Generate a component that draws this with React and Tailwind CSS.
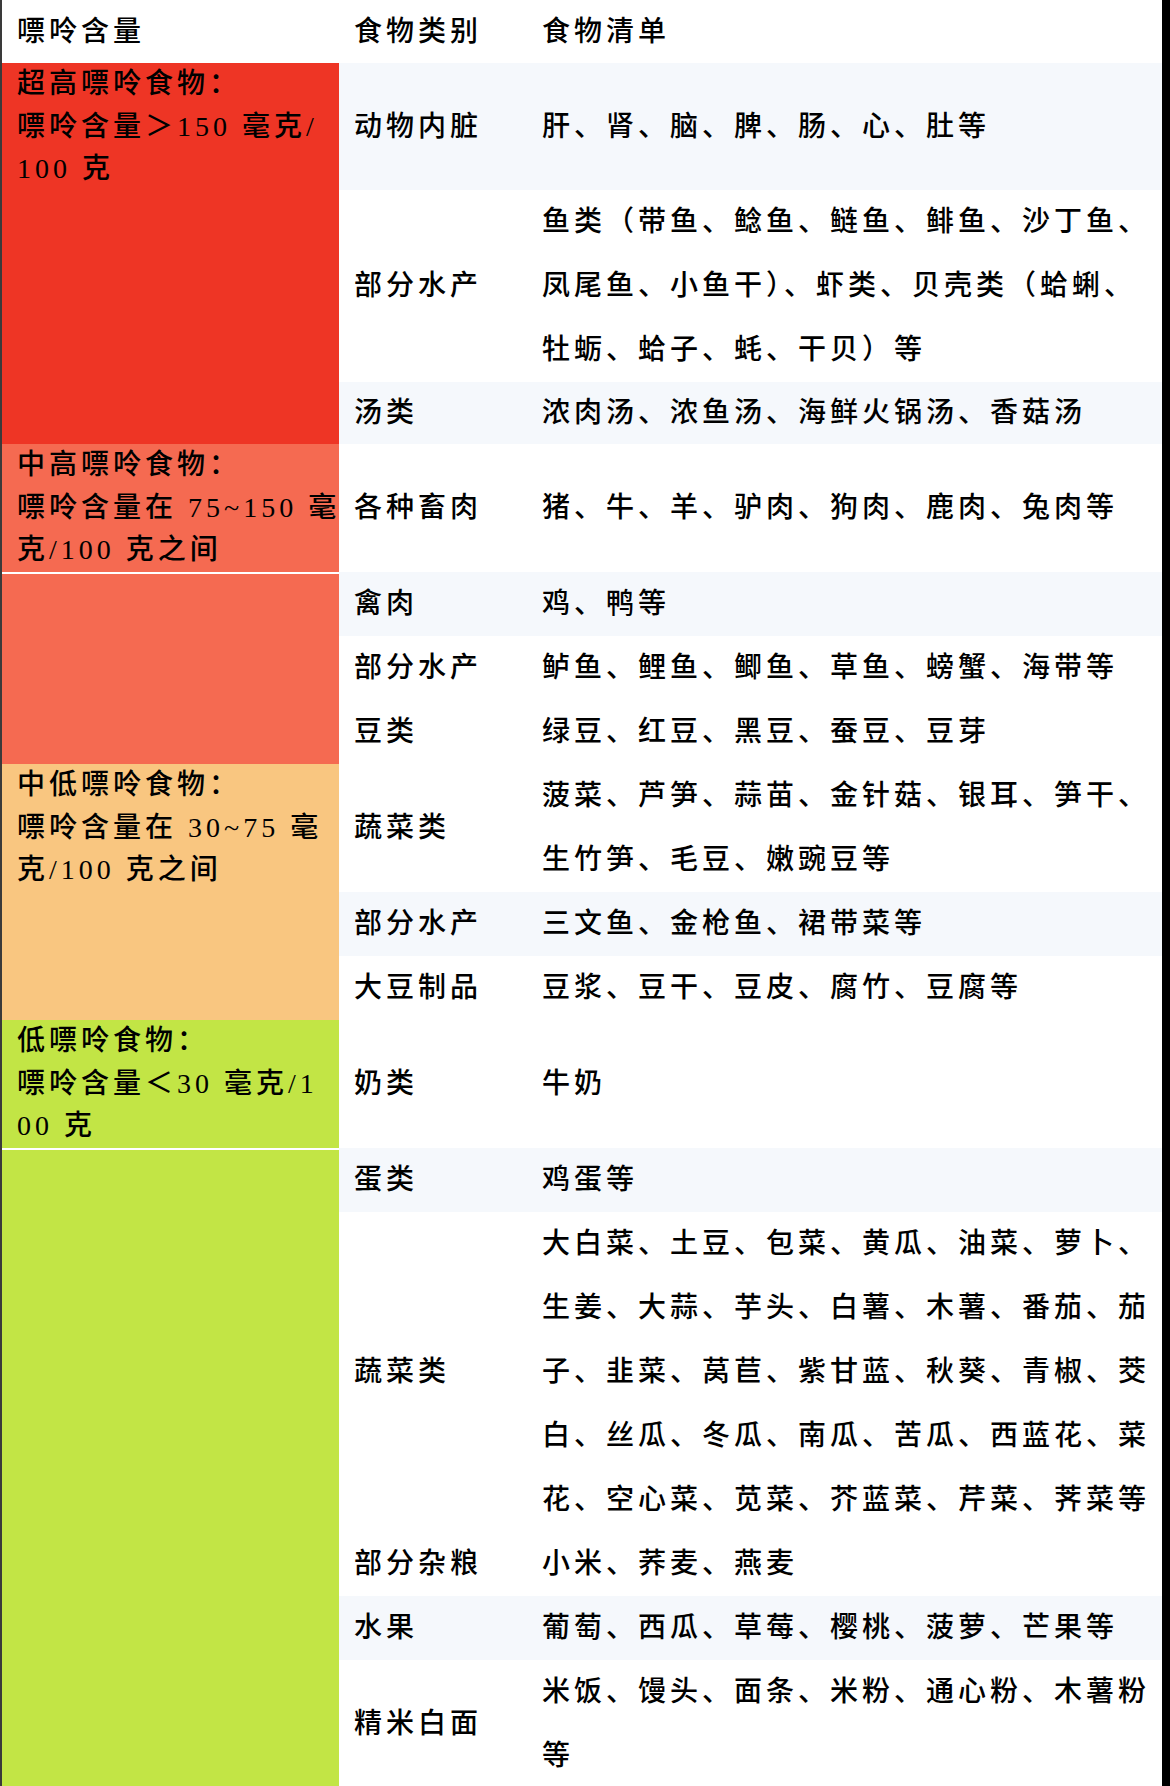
import React from 'react';

const L = 'bg-[#f5f8fc]';
const W = 'bg-white';

const groups = [
  {
    color: 'bg-[#ee3525]',
    label: ['超高嘌呤食物：', '嘌呤含量＞150 毫克/', '100 克'],
    rows: [
      { cat: '动物内脏', items: '肝、肾、脑、脾、肠、心、肚等', h: 'h-[127px]', bg: L },
      { cat: '部分水产', items: '鱼类（带鱼、鲶鱼、鲢鱼、鲱鱼、沙丁鱼、凤尾鱼、小鱼干）、虾类、贝壳类（蛤蜊、牡蛎、蛤子、蚝、干贝）等', bg: W },
      { cat: '汤类', items: '浓肉汤、浓鱼汤、海鲜火锅汤、香菇汤', h: 'h-[62px]', bg: L },
    ],
  },
  {
    color: 'bg-[#f56a51]',
    label: ['中高嘌呤食物：', '嘌呤含量在 75~150 毫', '克/100 克之间'],
    rows: [{ cat: '各种畜肉', items: '猪、牛、羊、驴肉、狗肉、鹿肉、兔肉等', h: 'h-[128px]', bg: W }],
  },
  {
    color: 'bg-[#f56a51]',
    sep: true,
    rows: [
      { cat: '禽肉', items: '鸡、鸭等', bg: L },
      { cat: '部分水产', items: '鲈鱼、鲤鱼、鲫鱼、草鱼、螃蟹、海带等', bg: W },
      { cat: '豆类', items: '绿豆、红豆、黑豆、蚕豆、豆芽', bg: W },
    ],
  },
  {
    color: 'bg-[#f9c680]',
    label: ['中低嘌呤食物：', '嘌呤含量在 30~75 毫', '克/100 克之间'],
    rows: [
      { cat: '蔬菜类', items: '菠菜、芦笋、蒜苗、金针菇、银耳、笋干、生竹笋、毛豆、嫩豌豆等', bg: W },
      { cat: '部分水产', items: '三文鱼、金枪鱼、裙带菜等', bg: L },
      { cat: '大豆制品', items: '豆浆、豆干、豆皮、腐竹、豆腐等', bg: W },
    ],
  },
  {
    color: 'bg-[#c2e545]',
    label: ['低嘌呤食物：', '嘌呤含量＜30 毫克/1', '00 克'],
    rows: [{ cat: '奶类', items: '牛奶', h: 'h-[128px]', bg: W }],
  },
  {
    color: 'bg-[#c2e545]',
    sep: true,
    rows: [
      { cat: '蛋类', items: '鸡蛋等', bg: L },
      { cat: '蔬菜类', items: '大白菜、土豆、包菜、黄瓜、油菜、萝卜、生姜、大蒜、芋头、白薯、木薯、番茄、茄子、韭菜、莴苣、紫甘蓝、秋葵、青椒、茭白、丝瓜、冬瓜、南瓜、苦瓜、西蓝花、菜花、空心菜、苋菜、芥蓝菜、芹菜、荠菜等', bg: W },
      { cat: '部分杂粮', items: '小米、荞麦、燕麦', bg: W },
      { cat: '水果', items: '葡萄、西瓜、草莓、樱桃、菠萝、芒果等', bg: L },
      { cat: '精米白面', items: '米饭、馒头、面条、米粉、通心粉、木薯粉等', bg: W },
    ],
  },
];

function Row({ cat, items, h, bg }) {
  return (
    <div className={`flex items-center ${bg} ${h || ''}`}>
      <div className="w-[203px] shrink-0 pl-[15px] leading-[64px]">{cat}</div>
      <div className="flex-1 leading-[64px]">{items}</div>
    </div>
  );
}

export default function App() {
  return (
    <div
      className="w-[1170px] h-[1786px] overflow-hidden bg-white border-l-2 border-l-[#3a3a3a] border-r-8 border-r-black text-[28px] font-medium tracking-[4px] text-black"
      style={{ fontFamily: '"Liberation Serif", "Noto Sans CJK SC", serif' }}
    >
      <div className="flex items-center h-[63px] bg-white">
        <div className="w-[337px] shrink-0 pl-[15px]">嘌呤含量</div>
        <div className="w-[203px] shrink-0 pl-[15px]">食物类别</div>
        <div className="flex-1">食物清单</div>
      </div>
      {groups.map((g, i) => (
        <div key={i} className="flex">
          <div className={`w-[337px] shrink-0 ${g.color} pl-[15px] leading-[42.67px] whitespace-nowrap ${g.sep ? 'border-t-2 border-white' : ''}`}>
            {g.label && g.label.map((line) => <div key={line}>{line}</div>)}
          </div>
          <div className="flex-1">
            {g.rows.map((r) => (
              <Row key={r.cat + r.items} {...r} />
            ))}
          </div>
        </div>
      ))}
    </div>
  );
}
